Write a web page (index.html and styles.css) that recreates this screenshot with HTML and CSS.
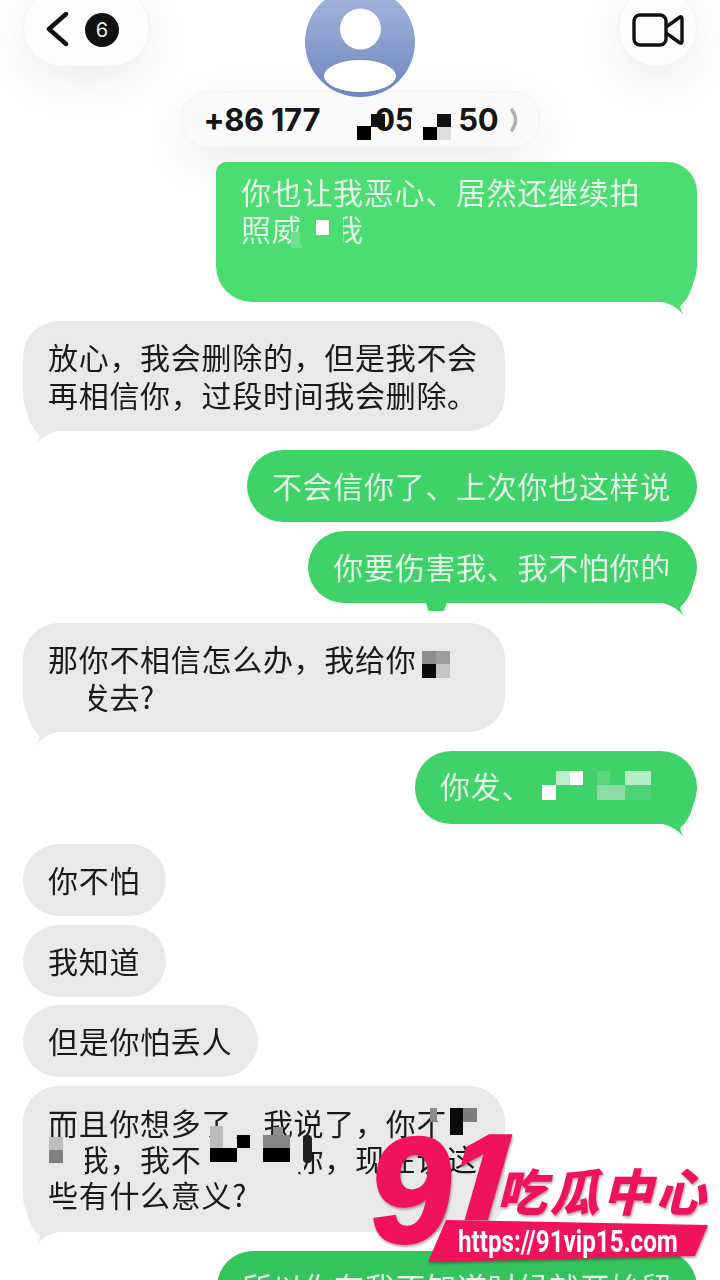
FILE: index.html
```html
<!DOCTYPE html>
<html lang="zh-CN">
<head>
    <meta charset="UTF-8">
    <meta name="viewport" content="width=device-width, initial-scale=1.0">
    <title>信息</title>
    <link rel="stylesheet" href="styles.css">
</head>
<body>
<div id="screen">
    <header id="topbar">
        <div class="nav-row">
            <div class="nav-btn back-btn">
                <svg class="back-icon" width="24" height="36" viewBox="0 0 24 36"><path d="M20 2 L3 17 L20 32" fill="none" stroke="#111" stroke-width="4.4" stroke-linecap="round" stroke-linejoin="round"/></svg>
                <span class="badge">6</span>
            </div>
            <div class="nav-btn video-btn">
                <svg width="52" height="36" viewBox="0 0 52 36"><rect x="2" y="3" width="32" height="30" rx="6" fill="none" stroke="#111" stroke-width="3.4"/><path d="M34 15 L48 5 Q50 4 50 7 V29 Q50 32 48 31 L34 21" fill="none" stroke="#111" stroke-width="3.4" stroke-linejoin="round"/></svg>
            </div>
        </div>
        <div class="avatar">
            <svg width="110" height="110" viewBox="0 0 110 110">
                <defs><linearGradient id="avatar-fill" x1="0" y1="0" x2="0" y2="1"><stop offset="0" stop-color="#a6b8dc"/><stop offset="1" stop-color="#6f84c1"/></linearGradient></defs>
                <circle cx="55" cy="55" r="55" fill="url(#avatar-fill)"/>
                <circle cx="55.500" cy="42" r="20.500" fill="#fff"/>
                <ellipse cx="55" cy="89" rx="36" ry="16" fill="#fff"/>
            </svg>
        </div>
        <div class="phone-pill">
            <span class="num-a">+86 177</span><span class="num-b">05</span><span class="num-c">50</span>
            <svg class="pill-arrow" width="12" height="24" viewBox="0 0 12 24"><path d="M3 2 Q10 12 3 22" fill="none" stroke="#b0b0b0" stroke-width="3.500" stroke-linecap="round"/></svg>
            <svg class="mosaic" aria-hidden="true">
                <rect x="175" y="34" width="14" height="14" fill="#000"/>
                <rect x="189" y="22" width="14" height="13" fill="#111"/>
                <rect x="229" y="20" width="12" height="30" fill="#fafafa"/>
                <rect x="241" y="35" width="14" height="13" fill="#000"/>
                <rect x="255" y="22" width="14" height="13" fill="#111"/>
                <rect x="255" y="35" width="14" height="13" fill="#ddd"/>
            </svg>
        </div>
    </header>

    <main id="chat">
        <div class="bubble sent tail first-msg">你也让我恶心、居然还继续拍<br>照威<span class="gap"></span>我
            <svg class="mosaic" aria-hidden="true">
                <rect x="75" y="70" width="11" height="16" fill="#6fe08f"/>
                <rect x="84" y="52" width="30" height="30" fill="#4bdc72"/>
                <rect x="100" y="58" width="13" height="15" fill="#fff"/>
                <rect x="114" y="52" width="13" height="34" fill="#4bdc72"/>
            </svg>
        </div>
        <div class="bubble recv tail turn wide">放心，我会删除的，但是我不会<br>再相信你，过段时间我会删除。</div>
        <div class="bubble sent turn">不会信你了、上次你也这样说</div>
        <div class="bubble sent tail nub">你要伤害我、我不怕你的</div>
        <div class="bubble recv tail turn wide short">那你不相信怎么办，我给你<br><span class="gap"></span>发去?
            <svg class="mosaic" aria-hidden="true">
                <rect x="399" y="28" width="14" height="13" fill="#8e8e8e"/>
                <rect x="413" y="28" width="14" height="13" fill="#9c9c9c"/>
                <rect x="399" y="41" width="14" height="14" fill="#0a0a0a"/>
                <rect x="413" y="41" width="14" height="14" fill="#c4c4c4"/>
                <rect x="26" y="55" width="40" height="36" fill="#e9e9e9"/>
            </svg>
        </div>
        <div class="bubble sent tail turn msg-send">你发、
            <svg class="mosaic" aria-hidden="true">
                <rect x="127" y="34" width="14" height="15" fill="#fff"/>
                <rect x="141" y="20" width="14" height="14" fill="#bdeec9"/>
                <rect x="155" y="20" width="13" height="14" fill="#fff"/>
                <rect x="182" y="34" width="28" height="15" fill="#8fdca6"/>
                <rect x="182" y="20" width="13" height="14" fill="#5ad67f"/>
                <rect x="210" y="20" width="26" height="14" fill="#b6ecc5"/>
                <rect x="210" y="34" width="26" height="15" fill="#4dd277"/>
            </svg>
        </div>
        <div class="bubble recv turn">你不怕</div>
        <div class="bubble recv">我知道</div>
        <div class="bubble recv tight">但是你怕丢人</div>
        <div class="bubble recv tail wide long">而且你想多了，我说了，你不<br><span class="gap"></span>我，我不<span class="gap-wide"></span>你，现在说这<br>些有什么意义?
            <svg class="mosaic" aria-hidden="true">
                <rect x="212" y="38" width="30" height="12" fill="#e9e9e9"/>
                <rect x="407" y="22" width="7" height="14" fill="#8a8a8a"/>
                <rect x="412" y="36" width="15" height="14" fill="#e9e9e9"/>
                <rect x="427" y="22" width="13" height="27" fill="#0a0a0a"/>
                <rect x="440" y="22" width="14" height="14" fill="#7d7d7d"/>
                <rect x="26" y="51" width="14" height="13" fill="#bdbdbd"/>
                <rect x="26" y="64" width="14" height="13" fill="#808080"/>
                <rect x="40" y="52" width="22" height="36" fill="#e9e9e9"/>
                <rect x="187" y="40" width="13" height="22" fill="#bcbcbc"/>
                <rect x="187" y="62" width="27" height="14" fill="#000"/>
                <rect x="214" y="49" width="13" height="13" fill="#000"/>
                <rect x="240" y="49" width="27" height="13" fill="#858585"/>
                <rect x="250" y="41" width="10" height="8" fill="#8e8e8e"/>
                <rect x="240" y="62" width="27" height="14" fill="#000"/>
                <rect x="270" y="52" width="11" height="34" fill="#e9e9e9"/>
                <rect x="280" y="49" width="9" height="28" rx="4" fill="#222"/>
            </svg>
        </div>
        <div class="bubble sent turn last-msg">所以你有我不知道时候就开始留</div>
    </main>

    <div id="watermark">
        <div class="wm-nine">9</div>
        <div class="wm-one">1</div>
        <div class="wm-title">吃瓜中心</div>
        <div class="wm-banner"><span class="wm-url">https://91vip15.com</span></div>
    </div>
</div>
</body>
</html>
```

FILE: styles.css
```css
* {
    box-sizing: border-box;
}

html, body {
    margin: 0;
    padding: 0;
    background: #fff;
}

#screen {
    position: relative;
    width: 720px;
    height: 1280px;
    overflow: hidden;
    font-family: "Noto Sans CJK SC", "Noto Sans", sans-serif;
}

/* top bar */
#topbar {
    position: relative;
    height: 162px;
    display: flex;
    flex-direction: column;
    align-items: center;
    z-index: 2;
}

.nav-row {
    width: 100%;
    height: 79px;
    margin-top: -12px;
    padding: 0 23px;
    display: flex;
    justify-content: space-between;
}

.nav-btn {
    height: 79px;
    border-radius: 40px;
    background: #fdfdfd;
    border: 1px solid #f3f3f3;
    box-shadow: 0 14px 44px rgba(0, 0, 0, 0.08);
    display: flex;
    align-items: center;
    padding-top: 4px;
}

.back-btn {
    width: 127px;
    padding-left: 22px;
    gap: 15px;
}

.video-btn {
    width: 79px;
    justify-content: center;
}

.badge {
    width: 34px;
    height: 34px;
    border-radius: 50%;
    background: #111;
    color: #eee;
    font: 20px "Inter", sans-serif;
    display: flex;
    align-items: center;
    justify-content: center;
}

.avatar {
    position: absolute;
    left: 305px;
    top: -13px;
    width: 110px;
    height: 110px;
    z-index: 3;
}

.phone-pill {
    position: relative;
    width: 359px;
    height: 57px;
    margin-top: 24px;
    border-radius: 29px;
    background: #fafafa;
    border: 1px solid #f2f2f2;
    box-shadow: 0 14px 44px rgba(0, 0, 0, 0.08);
    font: 700 31px "Inter", sans-serif;
    letter-spacing: -0.3px;
    color: #161616;
    display: flex;
    align-items: center;
    padding-left: 22px;
}

.num-b {
    margin-left: 54px;
}

.num-c {
    margin-left: 44px;
}

.pill-arrow {
    margin-left: 11px;
}

.mosaic {
    position: absolute;
    left: 0;
    top: 0;
    width: 100%;
    height: 100%;
    overflow: visible;
    pointer-events: none;
}

/* messages */
#chat {
    position: relative;
    z-index: 3;
    padding: 0 23px;
    display: flex;
    flex-direction: column;
    gap: 9px;
}

.bubble {
    position: relative;
    padding: 16px 26px 18px 25px;
    border-radius: 36px;
    font-size: 30px;
    letter-spacing: 0.7px;
    line-height: 38px;
    white-space: nowrap;
    width: fit-content;
    filter: blur(0.35px);
}

.sent {
    align-self: flex-end;
    background: #3fd268;
    color: #e4f8ea;
}

.recv {
    align-self: flex-start;
    background: #e9e9e9;
    color: #1a1a1a;
}

.turn {
    margin-top: 10px;
}

.tight {
    margin-top: -1px;
}

.wide {
    width: 482px;
}

.short {
    height: 109px;
}

.long {
    height: 146px;
    padding-top: 18px;
    line-height: 36px;
}

.gap {
    display: inline-block;
    width: 30.700px;
}

.gap-wide {
    display: inline-block;
    width: 92.100px;
}

.tail::after {
    content: "";
    position: absolute;
    bottom: -13px;
    width: 40px;
    height: 40px;
    background: inherit;
}

.sent.tail::after {
    right: 0;
    clip-path: path("M38 0 L0 0 L0 27 L6 27 Q18 30 27 40 Q22 33 24 30 Q34 22 38 0 Z");
}

.recv.tail::after {
    left: 0;
    clip-path: path("M2 0 L40 0 L40 27 L34 27 Q22 30 13 40 Q18 33 16 30 Q6 22 2 0 Z");
}

.nub {
    margin-bottom: 1px;
}

.nub::before {
    content: "";
    position: absolute;
    left: 117px;
    bottom: -8px;
    width: 22px;
    height: 10px;
    background: inherit;
    clip-path: polygon(0 0, 100% 0, 85% 100%, 15% 100%);
}

.first-msg {
    width: 481px;
    height: 140px;
    padding-top: 11px;
    line-height: 37px;
    border-radius: 10px 30px 36px 36px;
    background: #4bdc72;
}

.msg-send {
    width: 282px;
    height: 73px;
    padding-top: 15px;
    margin-bottom: 1px;
}

.last-msg {
    width: 480px;
    background: #33c45d;
}

/* site watermark */
#watermark {
    position: absolute;
    left: 360px;
    top: 1120px;
    width: 360px;
    height: 160px;
    z-index: 5;
    color: #f0135c;
    filter: drop-shadow(1px 2px 1px rgba(60, 0, 20, 0.35));
}

.wm-nine {
    position: absolute;
    left: 11px;
    top: -20px;
    font: 700 150px/1.2 "Liberation Sans", sans-serif;
    -webkit-text-stroke: 3px #f0135c;
    transform: skewX(-6deg);
}

.wm-one {
    position: absolute;
    left: 92px;
    top: -13px;
    font: 900 118px/1.2 "Inter", sans-serif;
    transform: skewX(-16deg);
}

.wm-title {
    position: absolute;
    left: 142px;
    top: 39px;
    font-size: 50px;
    font-weight: 900;
    letter-spacing: 3px;
    line-height: 1.2;
    transform: skewX(-14deg);
    white-space: nowrap;
}

.wm-banner {
    position: absolute;
    left: 68px;
    top: 100px;
    width: 280px;
    height: 42px;
    background: #f0135c;
    clip-path: polygon(18px 0, 100% 5px, 267px 36px, 0 100%);
    display: flex;
    align-items: center;
    justify-content: center;
}

.wm-url {
    color: #fff;
    font: 700 31px "Roboto", sans-serif;
    transform: scaleX(0.78);
    white-space: nowrap;
}
```
